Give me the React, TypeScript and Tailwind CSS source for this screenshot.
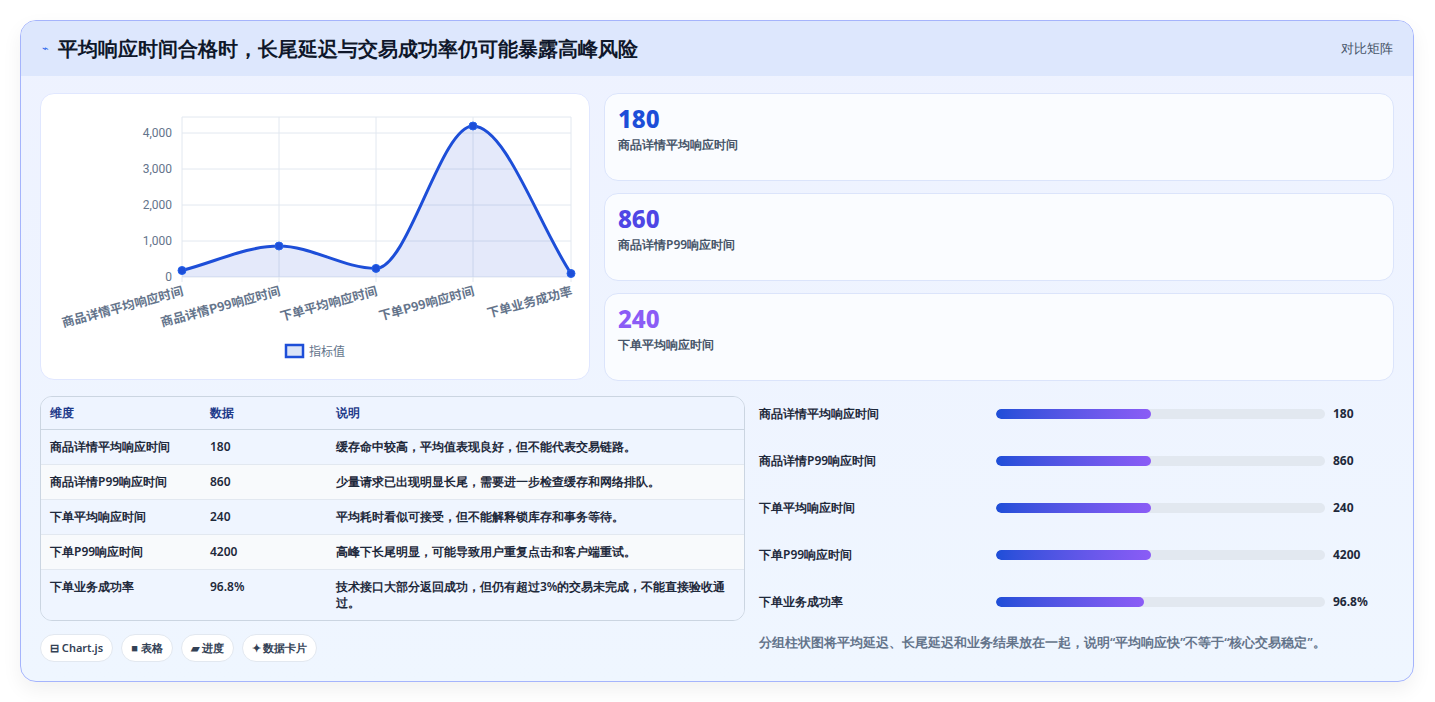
import React from "react";

const pts = [
  [141, 176.5],
  [238, 152],
  [335, 174.4],
  [432, 32],
  [530, 179.5],
];
function curve() {
  const n = pts.length;
  const dx: number[] = [], m: number[] = [];
  for (let i = 0; i < n - 1; i++) {
    dx.push(pts[i + 1][0] - pts[i][0]);
    m.push((pts[i + 1][1] - pts[i][1]) / dx[i]);
  }
  const tg: number[] = [m[0]];
  for (let i = 1; i < n - 1; i++) tg.push(m[i - 1] * m[i] <= 0 ? 0 : (m[i - 1] + m[i]) / 2);
  tg.push(m[n - 2]);
  let d = `M${pts[0][0]},${pts[0][1]}`;
  for (let i = 0; i < n - 1; i++) {
    const h = dx[i] / 3;
    d += ` C${pts[i][0] + h},${pts[i][1] + tg[i] * h} ${pts[i + 1][0] - h},${pts[i + 1][1] - tg[i + 1] * h} ${pts[i + 1][0]},${pts[i + 1][1]}`;
  }
  return d;
}
const labels = ["商品详情平均响应时间", "商品详情P99响应时间", "下单平均响应时间", "下单P99响应时间", "下单业务成功率"];
const rows = [
  ["商品详情平均响应时间", "180", "缓存命中较高，平均值表现良好，但不能代表交易链路。"],
  ["商品详情P99响应时间", "860", "少量请求已出现明显长尾，需要进一步检查缓存和网络排队。"],
  ["下单平均响应时间", "240", "平均耗时看似可接受，但不能解释锁库存和事务等待。"],
  ["下单P99响应时间", "4200", "高峰下长尾明显，可能导致用户重复点击和客户端重试。"],
  ["下单业务成功率", "96.8%", "技术接口大部分返回成功，但仍有超过3%的交易未完成，不能直接验收通过。"],
];
const bars = [
  ["商品详情平均响应时间", "180", 47],
  ["商品详情P99响应时间", "860", 47],
  ["下单平均响应时间", "240", 47],
  ["下单P99响应时间", "4200", 47],
  ["下单业务成功率", "96.8%", 45],
];

function Chart() {
  const d = curve();
  return (
    <svg width="549" height="286" className="block">
      {[183, 147, 111, 75, 39].map((y) => (
        <line key={y} x1="141" x2="530" y1={y} y2={y} stroke="#e2e8f0" />
      ))}
      <line x1="141" x2="530" y1="23" y2="23" stroke="#e2e8f0" />
      {pts.map(([x]) => (
        <line key={x} x1={x} x2={x} y1="23" y2="188" stroke="#e2e8f0" />
      ))}
      {["0", "1,000", "2,000", "3,000", "4,000"].map((l, i) => (
        <text key={l} x="131" y={187 - i * 36} textAnchor="end" fontSize="12" fill="#64748b" fontFamily="Roboto, sans-serif">
          {l}
        </text>
      ))}
      <path d={`${d} L530,183 L141,183 Z`} fill="rgba(29,78,216,0.12)" />
      <path d={d} fill="none" stroke="#1d4ed8" strokeWidth="3" />
      {pts.map(([x, y]) => (
        <circle key={x} cx={x} cy={y} r="4" fill="#1d4ed8" stroke="#2563eb" />
      ))}
      {labels.map((l, i) => (
        <text
          key={l}
          transform={`translate(${pts[i][0] + 2},${201}) rotate(-15)`}
          textAnchor="end"
          fontSize="12.5"
          fontWeight="600"
          fill="#64748b"
          fontFamily="'Noto Sans CJK SC', sans-serif"
        >
          {l}
        </text>
      ))}
      <rect x="245" y="251" width="17" height="12" fill="#dbe4f7" stroke="#1d4ed8" strokeWidth="2.5" />
      <text x="268" y="262" fontSize="12" fill="#64748b" fontFamily="'Noto Sans CJK SC', sans-serif">
        指标值
      </text>
    </svg>
  );
}

export default function App() {
  const cards = [
    ["180", "商品详情平均响应时间", "text-[#1d4ed8]"],
    ["860", "商品详情P99响应时间", "text-[#4f46e5]"],
    ["240", "下单平均响应时间", "text-[#8b5cf6]"],
  ];
  return (
    <div className="w-[1435px] h-[702px] bg-white p-[20px] pr-[21px] font-['Noto_Sans_CJK_SC',sans-serif]">
      <div className="h-[662px] rounded-2xl border border-[#a5b4fc] bg-gradient-to-b from-[#eef2ff] to-[#eff6ff] shadow-[0_8px_20px_rgba(0,0,0,0.06)] overflow-hidden">
        <div className="h-[55px] bg-[#dde7fd] flex items-center justify-between pl-[21px] pr-[20px]">
          <div className="flex items-center gap-[9px]">
            <span className="text-[#2563eb] text-[11px]">⌁</span>
            <span className="text-[20px] font-bold text-[#0f172a]">平均响应时间合格时，长尾延迟与交易成功率仍可能暴露高峰风险</span>
          </div>
          <span className="text-[13px] text-[#475569]">对比矩阵</span>
        </div>
        <div className="px-[19px] pt-[17px]">
          <div className="flex gap-[14px]">
            <div className="w-[550px] h-[287px] bg-white rounded-[14px] border border-[#e0e7ff]">
              <Chart />
            </div>
            <div className="flex-1 flex flex-col gap-[12px]">
              {cards.map(([v, l, c]) => (
                <div key={v} className="h-[88px] bg-[#fafcff] rounded-[14px] border border-[#dbe4fb] pl-[13px] pt-[9px]">
                  <div className={`text-[24px] font-extrabold leading-[32px] ${c}`}>{v}</div>
                  <div className="text-[12px] text-[#475569] font-semibold mt-[1px]">{l}</div>
                </div>
              ))}
            </div>
          </div>
          <div className="flex gap-[14px] mt-[15px]">
            <div className="w-[705px]">
              <div className="rounded-[12px] border border-[#cbd5e1] overflow-hidden text-[12px] font-semibold text-[#1e293b]">
                <div className="flex h-[33px] items-center bg-[#eef4ff] text-[#1e3a8a] border-b border-[#cbd5e1]">
                  <div className="w-[169px] pl-[9px]">维度</div>
                  <div className="w-[126px]">数据</div>
                  <div className="flex-1">说明</div>
                </div>
                {rows.map((r, i) => (
                  <div key={r[0]} className={`flex py-[9px] leading-[16px] ${i % 2 ? "bg-[#f8fafc]" : "bg-[#eff5ff]"} ${i < 4 ? "border-b border-[#e2e8f0]" : ""}`}>
                    <div className="w-[169px] pl-[9px] shrink-0">{r[0]}</div>
                    <div className="w-[126px] shrink-0">{r[1]}</div>
                    <div className="flex-1 pr-[2px]">{r[2]}</div>
                  </div>
                ))}
              </div>
              <div className="flex gap-[8px] mt-[13px] text-[11px] font-semibold text-[#334155]">
                {["⊟ Chart.js", "■ 表格", "▰ 进度", "✦ 数据卡片"].map((t) => (
                  <span key={t} className="h-[28px] px-[9px] flex items-center rounded-full bg-white border border-[#e2e8f0]">{t}</span>
                ))}
              </div>
            </div>
            <div className="flex-1 -mt-[6px]">
              {bars.map(([l, v, w]) => (
                <div key={l as string} className="flex items-center h-[47px] text-[12px] font-semibold text-[#1e293b]">
                  <div className="w-[237px]">{l}</div>
                  <div className="w-[329px] h-[10px] rounded-full bg-[#e2e8f0] overflow-hidden">
                    <div className="h-full rounded-full bg-gradient-to-r from-[#1d4ed8] to-[#8b5cf6]" style={{ width: `${w}%` }} />
                  </div>
                  <div className="ml-[8px] font-bold">{v}</div>
                </div>
              ))}
              <div className="mt-[9px] text-[12.5px] text-[#64748b] font-semibold">分组柱状图将平均延迟、长尾延迟和业务结果放在一起，说明“平均响应快”不等于“核心交易稳定”。</div>
            </div>
          </div>
        </div>
      </div>
    </div>
  );
}
